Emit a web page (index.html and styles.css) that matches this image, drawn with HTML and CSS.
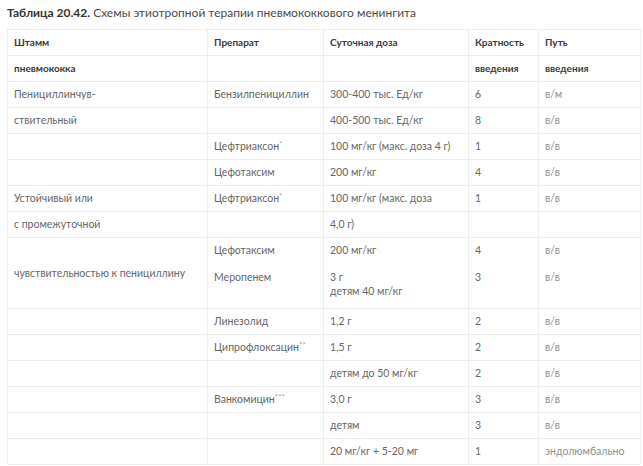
FILE: index.html
```html
<!DOCTYPE html>
<html lang="ru">
<head>
<meta charset="utf-8">
<link rel="stylesheet" href="styles.css">
</head>
<body>
<p class="caption"><b>Таблица 20.42.</b> Схемы этиотропной терапии пневмококкового менингита</p>
<table class="tbl">
  <colgroup>
    <col class="c1"><col class="c2"><col class="c3"><col class="c4"><col class="c5">
  </colgroup>
  <tr class="head"><td>Штамм</td><td>Препарат</td><td>Суточная доза</td><td>Кратность</td><td>Путь</td></tr>
  <tr class="head"><td>пневмококка</td><td></td><td></td><td>введения</td><td>введения</td></tr>
  <tr><td>Пенициллинчув-</td><td>Бензилпенициллин</td><td>300-400 тыс. Ед/кг</td><td>6</td><td class="route">в/м</td></tr>
  <tr><td>ствительный</td><td></td><td>400-500 тыс. Ед/кг</td><td>8</td><td class="route">в/в</td></tr>
  <tr><td></td><td>Цефтриаксон<sup>*</sup></td><td>100 мг/кг (макс. доза 4 г)</td><td>1</td><td class="route">в/в</td></tr>
  <tr><td></td><td>Цефотаксим</td><td>200 мг/кг</td><td>4</td><td class="route">в/в</td></tr>
  <tr><td>Устойчивый или</td><td>Цефтриаксон<sup>*</sup></td><td>100 мг/кг (макс. доза</td><td>1</td><td class="route">в/в</td></tr>
  <tr><td>с промежуточной</td><td></td><td>4,0 г)</td><td></td><td></td></tr>
  <tr class="joined"><td rowspan="2" class="mid">чувствительностью к пенициллину</td><td>Цефотаксим</td><td>200 мг/кг</td><td>4</td><td class="route">в/в</td></tr>
  <tr class="tall"><td>Меропенем</td><td>3 г<br>детям 40 мг/кг</td><td>3</td><td class="route">в/в</td></tr>
  <tr><td></td><td>Линезолид</td><td>1,2 г</td><td>2</td><td class="route">в/в</td></tr>
  <tr><td></td><td>Ципрофлоксацин<sup>**</sup></td><td>1,5 г</td><td>2</td><td class="route">в/в</td></tr>
  <tr><td></td><td></td><td>детям до 50 мг/кг</td><td>2</td><td class="route">в/в</td></tr>
  <tr><td></td><td>Ванкомицин<sup>***</sup></td><td>3,0 г</td><td>3</td><td class="route">в/в</td></tr>
  <tr><td></td><td></td><td>детям</td><td>3</td><td class="route">в/в</td></tr>
  <tr><td></td><td></td><td>20 мг/кг + 5-20 мг</td><td>1</td><td class="route">эндолюмбально</td></tr>
</table>
</body>
</html>
```

FILE: styles.css
```css
html, body {
  margin: 0;
  padding: 0;
  background: #fff;
}
body {
  padding: 6px 7px 0 7px;
  font-family: Lato, "Open Sans", sans-serif;
  color: #666;
}
.caption {
  margin: 0 0 9px 0;
  font-size: 12px;
  line-height: 14px;
  color: #4a4a4a;
}
.caption b {
  color: #333;
  font-weight: 700;
}
.tbl {
  border-collapse: collapse;
  width: 634px;
  table-layout: fixed;
  font-size: 10.5px;
}
.c1 { width: 200px; }
.c2 { width: 116px; }
.c3 { width: 145px; }
.c4 { width: 70px; }
.c5 { width: 102px; }
.tbl td {
  border: 1px solid #eeeeee;
  padding: 0 6px;
  height: 25px;
  line-height: 25px;
  vertical-align: top;
  white-space: nowrap;
  color: #666;
}
.tbl td.mid {
  vertical-align: middle;
  line-height: 14px;
}
.tbl .head td {
  font-weight: 700;
  color: #3a3a3a;
  font-size: 10px;
}
.tbl td.route {
  color: #8f8f8f;
}
.tbl .joined td {
  border-bottom: none;
}
.tbl .joined td.mid {
  border-bottom: 1px solid #eeeeee;
}
.tbl .tall td {
  border-top: none;
  line-height: 14px;
  padding-top: 7px;
  padding-bottom: 10px;
  height: 28px;
}
sup {
  font-size: 8px;
  line-height: 0;
  color: #aaa;
  vertical-align: 3px;
}
```
